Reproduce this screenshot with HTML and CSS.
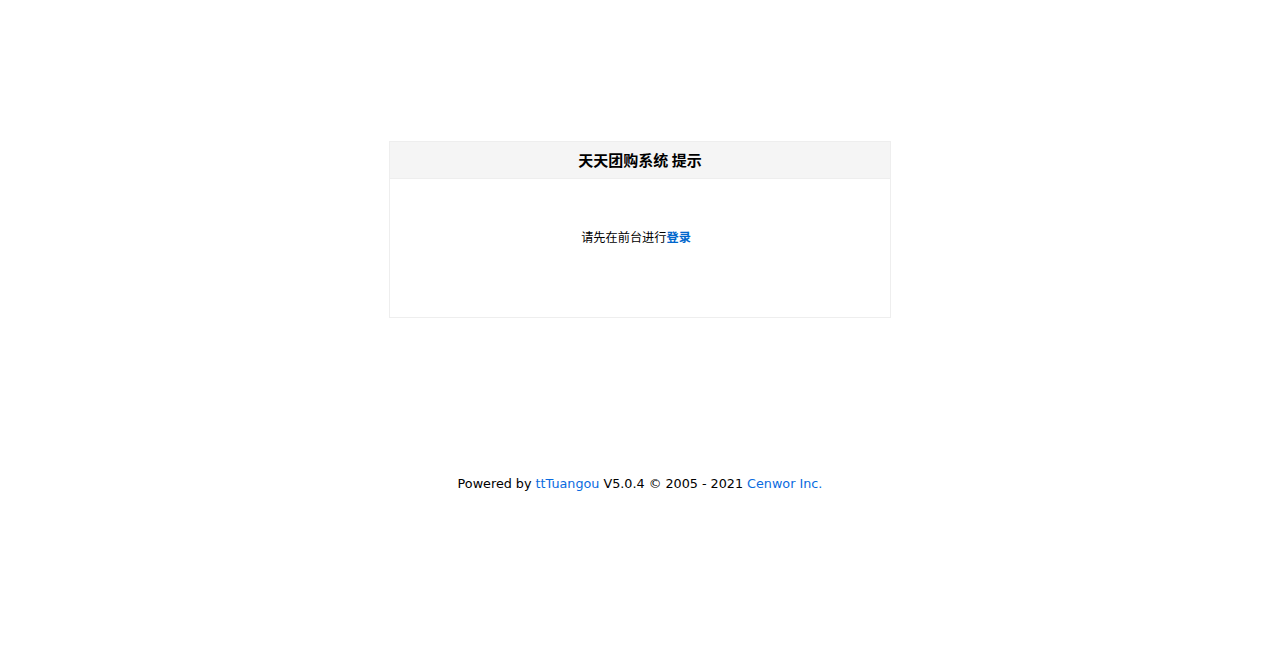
FILE: index.html
```html
<html><head><title>天天团购系统 提示</title>
<link rel="stylesheet" href="styles.css">
</head>
<body>
<div class="msg-box">
  <div class="msg-title">天天团购系统 提示</div>
  <div class="msg-body">请先在前台进行<a href="#" class="login-link">登录</a></div>
</div>
<div class="footer">
  Powered by <a href="#">ttTuangou</a> V5.0.4 &copy; 2005 - 2021 <a href="#">Cenwor Inc.</a>
</div>
</body></html>
```

FILE: styles.css
```css
body {
  margin: 0;
  padding: 0;
  background: #fff;
  color: #000;
  font-family: 'DejaVu Sans', Verdana, 'Noto Sans CJK SC', sans-serif;
  font-size: 12px;
}
a {
  text-decoration: none;
}
.msg-box {
  width: 500px;
  margin: 141px auto 0;
  border: 1px solid #eee;
}
.msg-title {
  height: 36px;
  line-height: 36px;
  background: #f5f5f5;
  border-bottom: 1px solid #eee;
  text-align: center;
  font-size: 15px;
  font-weight: bold;
  font-family: 'Noto Sans CJK SC', sans-serif;
}
.msg-body {
  height: 88px;
  padding: 50px 8px 0 0;
  line-height: 16px;
  text-align: center;
  font-size: 12.2px;
  font-family: 'Noto Sans CJK SC', sans-serif;
}
.login-link {
  color: #0066cc;
  font-weight: bold;
}
.footer {
  margin-top: 156px;
  line-height: 20px;
  text-align: center;
  font-size: 12.75px;
}
.footer a {
  color: #0a6be0;
}
```
